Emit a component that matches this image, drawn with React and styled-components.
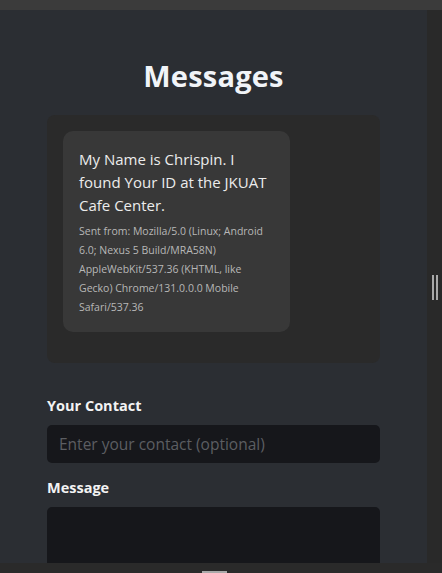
import React from "react";
import styled, { createGlobalStyle } from "styled-components";

const GlobalStyle = createGlobalStyle`
  html, body {
    margin: 0;
    padding: 0;
    background: #2b2e33;
    overflow: hidden;
  }
  * {
    box-sizing: border-box;
  }
`;

function App() {
  return (
    <Frame>
      <GlobalStyle />
      <TopBar />
      <Middle>
        <Content>
          <Title>Messages</Title>
          <Panel>
            <Bubble>
              <BubbleText>
                My Name is Chrispin. I found Your ID at the JKUAT Cafe Center.
              </BubbleText>
              <SentFrom>
                Sent from: Mozilla/5.0 (Linux; Android 6.0; Nexus 5
                Build/MRA58N) AppleWebKit/537.36 (KHTML, like Gecko)
                Chrome/131.0.0.0 Mobile Safari/537.36
              </SentFrom>
            </Bubble>
          </Panel>

          <Form>
            <Label>Your Contact</Label>
            <Input placeholder="Enter your contact (optional)" />
            <Label>Message</Label>
            <TextArea />
          </Form>
        </Content>
        <SideStrip>
          <Grip />
        </SideStrip>
      </Middle>
      <BottomStrip>
        <BottomGrip />
      </BottomStrip>
    </Frame>
  );
}

export default App;

const Frame = styled.div`
  display: grid;
  grid-template-rows: 10px 1fr 10px;
  height: 573px;
  width: 442px;
  font-family: "Open Sans", "Noto Sans", sans-serif;
`;

const TopBar = styled.div`
  background: #3b3b3b;
`;

const Middle = styled.div`
  display: grid;
  grid-template-columns: 1fr 15px;
  overflow: hidden;
`;

const Content = styled.div`
  background: #2b2e33;
  padding: 0 47px;
  overflow: hidden;
`;

const Title = styled.h1`
  margin: 46px 0 19px 0;
  text-align: center;
  color: #f1f4f8;
  font-size: 29px;
  font-weight: 700;
  line-height: 40px;
  letter-spacing: 0.2px;
`;

const Panel = styled.div`
  background: #2a2a2a;
  border-radius: 8px;
  padding: 16px 16px 31px 16px;
`;

const Bubble = styled.div`
  width: 227px;
  background: #383838;
  border-radius: 10px;
  padding: 17px 16px 15px 16px;
`;

const BubbleText = styled.p`
  margin: 0 0 5px 0;
  color: #ececec;
  font-size: 15px;
  line-height: 23px;
`;

const SentFrom = styled.p`
  margin: 0;
  color: #b7b7b7;
  font-size: 10.5px;
  line-height: 19px;
`;

const Form = styled.div`
  display: flex;
  flex-direction: column;
  padding-top: 32px;
`;

const Label = styled.label`
  color: #f3f3f3;
  font-size: 14.5px;
  font-weight: 700;
  line-height: 22px;
  margin-bottom: 8px;
`;

const Input = styled.input`
  height: 38px;
  width: 100%;
  background: #16171b;
  border: none;
  border-radius: 5px;
  padding: 0 12px;
  color: #e0e0e0;
  font-family: inherit;
  font-size: 15.5px;
  margin-bottom: 14px;
  outline: none;

  &::placeholder {
    color: #5c5e62;
  }
`;

const TextArea = styled.textarea`
  height: 100px;
  width: 100%;
  background: #16171b;
  border: none;
  border-radius: 5px;
  resize: none;
  outline: none;
`;

const SideStrip = styled.div`
  background: #292929;
  display: flex;
  justify-content: center;
  padding-top: 265px;
`;

const Grip = styled.div`
  width: 6px;
  height: 25px;
  border-left: 2px solid #a9a9a9;
  border-right: 2px solid #a9a9a9;
`;

const BottomStrip = styled.div`
  background: #2a2a2a;
  display: flex;
  padding-left: 202px;
  align-items: flex-end;
`;

const BottomGrip = styled.div`
  width: 25px;
  height: 2px;
  background: #a9a9a9;
`;
